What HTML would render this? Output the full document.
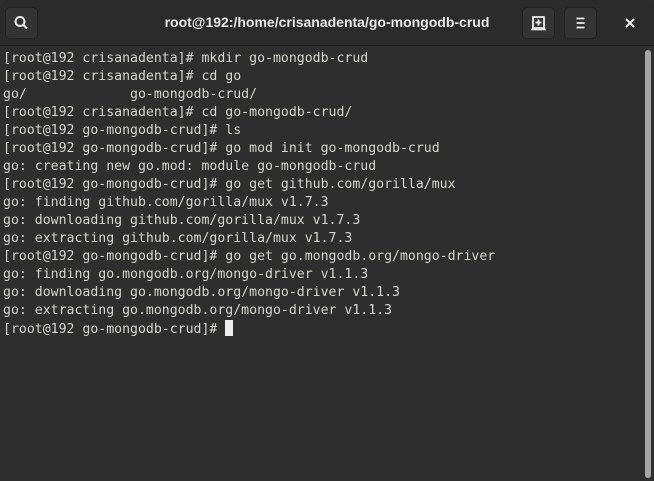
<!DOCTYPE html>
<html><head><style>
body{margin:0;width:654px;height:481px;overflow:hidden;background:#2d2d2d;}
.hdr{position:absolute;left:0;top:0;width:654px;height:45px;background:#2b2b2b;border-bottom:1px solid #1e1e1e;border-radius:8px 8px 0 0;}
.btn{position:absolute;top:7px;width:33px;height:32px;background:#333;border:1px solid #222;border-radius:5px;box-sizing:border-box;}
.title{position:absolute;left:0;width:654px;top:14px;text-align:center;color:#e8e8e8;font:bold 14px "Liberation Sans",sans-serif;}
.term{position:absolute;left:0;top:46px;width:654px;height:435px;background:#2e2e2e;}
pre{margin:0;position:absolute;left:3px;top:4px;color:#d3d7cf;font:13.2px/18px "DejaVu Sans Mono",monospace;}
.cur{display:inline-block;width:8px;height:16px;background:#eee;vertical-align:-3px;}
.sb{position:absolute;left:645px;top:50px;width:6px;height:428px;background:#a6a6a6;border-radius:3px;}
</style></head><body>
<div class="hdr">
<div class="btn" style="left:5px"><svg width="33" height="32" style="position:absolute;left:-1px;top:-1px"><circle cx="15" cy="14.5" r="4.5" stroke="#eee" stroke-width="2" fill="none"/><line x1="18.5" y1="18" x2="22" y2="21.5" stroke="#eee" stroke-width="2.2"/></svg></div>
<div class="title">root@192:/home/crisanadenta/go-mongodb-crud</div>
<div class="btn" style="left:522px"><svg width="33" height="32" style="position:absolute;left:-1px;top:-1px"><path d="M11 10h11v11H11z" stroke="#eee" stroke-width="1.8" fill="none"/><path d="M9 22.5h15" stroke="#eee" stroke-width="1.6"/><path d="M16.5 12.5v6M13.5 15.5h6" stroke="#eee" stroke-width="1.8"/></svg></div>
<div class="btn" style="left:564px"><svg width="33" height="32" style="position:absolute;left:-1px;top:-1px"><path d="M12.5 11.5h8M12.5 16h8M12.5 20.5h8" stroke="#eee" stroke-width="1.8"/></svg></div>
<svg width="12" height="12" style="position:absolute;left:624px;top:17px"><path d="M2 2l8 8M10 2l-8 8" stroke="#eee" stroke-width="2"/></svg>
</div>
<div class="term">
<pre>[root@192 crisanadenta]# mkdir go-mongodb-crud
[root@192 crisanadenta]# cd go
go/             go-mongodb-crud/
[root@192 crisanadenta]# cd go-mongodb-crud/
[root@192 go-mongodb-crud]# ls
[root@192 go-mongodb-crud]# go mod init go-mongodb-crud
go: creating new go.mod: module go-mongodb-crud
[root@192 go-mongodb-crud]# go get github.com/gorilla/mux
go: finding github.com/gorilla/mux v1.7.3
go: downloading github.com/gorilla/mux v1.7.3
go: extracting github.com/gorilla/mux v1.7.3
[root@192 go-mongodb-crud]# go get go.mongodb.org/mongo-driver
go: finding go.mongodb.org/mongo-driver v1.1.3
go: downloading go.mongodb.org/mongo-driver v1.1.3
go: extracting go.mongodb.org/mongo-driver v1.1.3
[root@192 go-mongodb-crud]# <span class="cur"></span></pre>
</div>
<div class="sb"></div>
</body></html>
